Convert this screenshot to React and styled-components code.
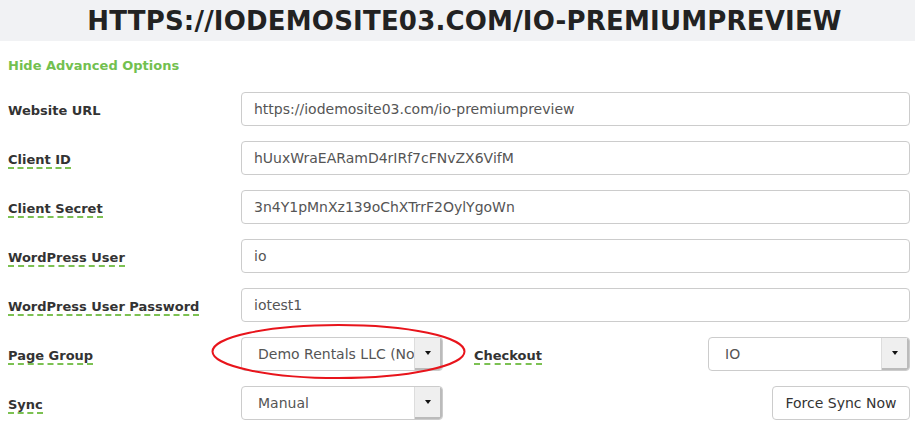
import React from "react";
import styled, { createGlobalStyle } from "styled-components";

const Global = createGlobalStyle`
  html, body { margin: 0; padding: 0; background: #fff; }
  body { font-family: "DejaVu Sans", "Open Sans", sans-serif; color: #333; }
`;

const Page = styled.div`
  position: relative;
  width: 915px;
`;

const Header = styled.header`
  height: 41px;
  padding-left: 14px;
  background: #f1f2f4;
  display: flex;
  align-items: center;
  justify-content: center;
`;

const Title = styled.h1`
  margin: 0;
  font-size: 26px;
  font-weight: 700;
  color: #222;
  letter-spacing: 0.2px;
`;

const Body = styled.div`
  padding: 0 5px 0 8px;
`;

const Toggle = styled.a`
  display: block;
  padding: 16px 0 17px;
  font-size: 13px;
  font-weight: 700;
  color: #72c04f;
  line-height: 18px;
  text-decoration: none;
`;

const Rows = styled.div`
  display: flex;
  flex-direction: column;
  gap: 15px;
`;

const Row = styled.div`
  display: flex;
  align-items: center;
  height: 34px;
`;

const LabelCell = styled.div`
  width: ${(p) => p.$w || 233}px;
  flex-shrink: 0;
  font-size: 13px;
  font-weight: 700;
  color: #333;
  padding-top: 2px;
`;

const Hint = styled.span`
  border-bottom: ${(p) => (p.$plain ? "none" : "2px dashed #7cc152")};
`;

const Input = styled.div`
  flex: 1;
  height: 34px;
  box-sizing: border-box;
  border: 1px solid #ccc;
  border-radius: 4px;
  padding: 0 12px;
  display: flex;
  align-items: center;
  font-size: 14px;
  color: #555;
  white-space: nowrap;
  overflow: hidden;
`;

const Select = styled.div`
  width: 202px;
  height: 34px;
  flex-shrink: 0;
  box-sizing: border-box;
  border: 1px solid #ccc;
  border-radius: 4px;
  display: flex;
  overflow: hidden;
  background: #fff;
`;

const SelectValue = styled.div`
  flex: 1;
  min-width: 0;
  padding-left: 16px;
  display: flex;
  align-items: center;
  font-size: 14px;
  color: #555;
  white-space: nowrap;
  overflow: hidden;
`;

const SelectArrow = styled.div`
  width: 27px;
  flex-shrink: 0;
  background: #efefef;
  border-left: 1px solid #ddd;
  box-shadow: inset -2px -2px 0 #bbb;
  display: flex;
  align-items: center;
  justify-content: center;
  &::after {
    content: "";
    border-left: 3.5px solid transparent;
    border-right: 3.5px solid transparent;
    border-top: 4px solid #111;
    margin: -2px 1px 0 0;
  }
`;

const Spacer = styled.div`
  width: ${(p) => p.$w}px;
  flex-shrink: 0;
`;

const Button = styled.button`
  margin-left: auto;
  height: 34px;
  width: 138px;
  box-sizing: border-box;
  border: 1px solid #ccc;
  border-radius: 4px;
  background: #fff;
  font-family: inherit;
  font-size: 14px;
  color: #333;
  padding: 0;
`;

const Annotation = styled.svg`
  position: absolute;
  left: 0;
  top: 0;
  pointer-events: none;
`;

const fields = [
  ["Website URL", "https://iodemosite03.com/io-premiumpreview", true],
  ["Client ID", "hUuxWraEARamD4rIRf7cFNvZX6VifM"],
  ["Client Secret", "3n4Y1pMnXz139oChXTrrF2OylYgoWn"],
  ["WordPress User", "io"],
  ["WordPress User Password", "iotest1"],
];

export default function App() {
  return (
    <>
      <Global />
      <Page>
        <Header>
          <Title>HTTPS://IODEMOSITE03.COM/IO-PREMIUMPREVIEW</Title>
        </Header>
        <Body>
          <Toggle>Hide Advanced Options</Toggle>
          <Rows>
            {fields.map(([label, value, plain]) => (
              <Row key={label}>
                <LabelCell>
                  <Hint $plain={plain}>{label}</Hint>
                </LabelCell>
                <Input>{value}</Input>
              </Row>
            ))}
            <Row>
              <LabelCell>
                <Hint>Page Group</Hint>
              </LabelCell>
              <Select>
                <SelectValue>Demo Rentals LLC (Nov)</SelectValue>
                <SelectArrow />
              </Select>
              <Spacer $w={31} />
              <LabelCell $w={234}>
                <Hint>Checkout</Hint>
              </LabelCell>
              <Select>
                <SelectValue>IO</SelectValue>
                <SelectArrow />
              </Select>
            </Row>
            <Row>
              <LabelCell>
                <Hint>Sync</Hint>
              </LabelCell>
              <Select>
                <SelectValue>Manual</SelectValue>
                <SelectArrow />
              </Select>
              <Button>Force Sync Now</Button>
            </Row>
          </Rows>
        </Body>
        <Annotation width="915" height="429">
          <ellipse cx="338.5" cy="351.5" rx="126" ry="26.5" fill="none" stroke="#e8141b" strokeWidth="2" />
        </Annotation>
      </Page>
    </>
  );
}
